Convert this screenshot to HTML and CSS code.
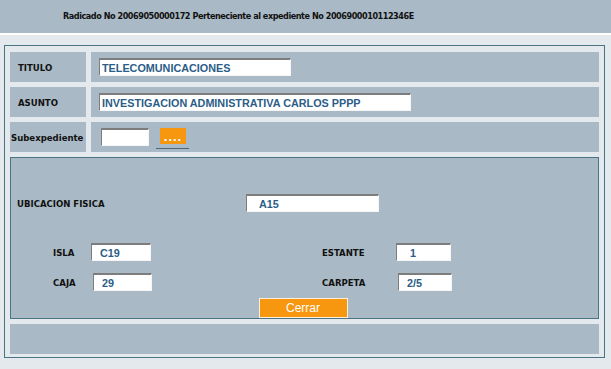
FILE: index.html
```html
<!DOCTYPE html>
<html lang="es">
<head>
    <meta charset="UTF-8">
    <title>Ubicacion fisica del radicado</title>
    <link rel="stylesheet" href="styles.css">
</head>
<body>

<!-- Cabecera -->
<div class="header">Radicado No 20069050000172 Perteneciente al expediente No 2006900010112346E</div>

<div class="main">
    <div class="box">
        <div class="row">
            <div class="cell label">TITULO</div>
            <div class="cell value"><input type="text" class="field field-titulo" value="TELECOMUNICACIONES"></div>
        </div>
        <div class="row">
            <div class="cell label">ASUNTO</div>
            <div class="cell value"><input type="text" class="field field-asunto" value="INVESTIGACION ADMINISTRATIVA CARLOS PPPP"></div>
        </div>
        <div class="row">
            <div class="cell label label-sub">Subexpediente</div>
            <div class="cell value value-sub">
                <input type="text" class="field field-sub" value="">
                <a href="#" class="dots-link"><span class="dots">....</span></a>
            </div>
        </div>

        <!-- Ubicacion -->
        <div class="panel">
            <div class="ubicacion">
                <span class="loc-label">UBICACION FISICA</span>
                <input type="text" class="field field-ubic" value="A15">
            </div>
            <div class="loc-row">
                <span class="loc-label">ISLA</span>
                <input type="text" class="field field-loc" value="C19">
                <span></span>
                <span class="loc-label">ESTANTE</span>
                <input type="text" class="field field-loc field-wide" value="1">
            </div>
            <div class="loc-row loc-row-2">
                <span class="loc-label">CAJA</span>
                <input type="text" class="field field-loc nudge" value="29">
                <span></span>
                <span class="loc-label">CARPETA</span>
                <input type="text" class="field field-loc nudge" value="2/5">
            </div>
            <div class="actions">
                <button class="btn-cerrar" onclick="window.close()">Cerrar</button>
            </div>
        </div>

        <div class="footer-row"></div>
    </div>
</div>

</body>
</html>
```

FILE: styles.css
```css
body {
    margin: 0;
    background-color: #e3e9ed;
    font-family: "DejaVu Sans Condensed", "DejaVu Sans", sans-serif;
}

.header {
    height: 33px;
    line-height: 33px;
    padding-left: 63px;
    background-color: #a9b9c5;
    border-bottom: 2px solid #ffffff;
    font-size: 9px;
    letter-spacing: -0.45px;
    font-weight: bold;
    color: #111;
}

.main {
    padding: 10px 6px 8px 4px;
}

.box {
    border: 1px solid #4b7482;
    padding: 6px 5px 3px 5px;
}

.row {
    display: grid;
    grid-template-columns: 76px 1fr;
    gap: 5px;
    margin-bottom: 5px;
}

.cell {
    height: 30px;
    background-color: #a9b9c5;
    display: flex;
    align-items: center;
}

.label {
    padding-left: 8px;
    font-size: 9.5px;
    font-weight: bold;
    color: #111;
}

.label-sub {
    padding-left: 1px;
}

.value {
    padding-left: 8px;
}

.value-sub {
    padding-left: 10px;
}

.field {
    box-sizing: border-box;
    height: 18px;
    margin: 0;
    padding: 0 0 0 2px;
    background-color: #fff;
    border: none;
    border-top: 2px solid #7d7d7d;
    border-left: 1px solid #7d7d7d;
    border-right: 1px solid #f6f6f6;
    border-bottom: 1px solid #f6f6f6;
    font-family: "Liberation Sans", Arial, sans-serif;
    font-size: 10.8px;
    font-weight: bold;
    color: #2b5d87;
    outline: none;
}

.field-titulo {
    width: 192px;
}

.field-asunto {
    width: 312px;
}

.field-sub {
    width: 48px;
}

.dots-link {
    margin-left: 7px;
    padding: 1px 3px 3px 4px;
    border-bottom: 1px solid #4f6473;
    text-decoration: none;
}

.dots {
    display: inline-block;
    width: 26px;
    height: 16px;
    line-height: 18px;
    background-color: #f7960f;
    color: #fff;
    font-family: "Liberation Sans", Arial, sans-serif;
    font-size: 13px;
    font-weight: bold;
    letter-spacing: 1px;
    text-align: center;
}

.panel {
    border: 1px solid #4b7482;
    background-color: #a9b9c5;
    padding: 36px 0 0 6px;
    margin-bottom: 5px;
}

.loc-label {
    font-size: 9.5px;
    font-weight: bold;
    color: #111;
}

.ubicacion {
    display: grid;
    grid-template-columns: 229px 133px;
    align-items: center;
}

.field-ubic {
    padding-left: 12px;
}

.loc-row {
    display: grid;
    grid-template-columns: 38px 60px 171px 74px 55px;
    align-items: center;
    padding-left: 36px;
    margin-top: 31px;
}

.loc-row-2 {
    margin-top: 12px;
}

.field-loc {
    width: 60px;
    padding-left: 8px;
}

.field-wide {
    width: 55px;
    padding-left: 13px;
}

.nudge {
    margin-left: 2px;
    width: 59px;
}

.loc-row-2 .field-loc:last-child {
    width: 54px;
}

.actions {
    display: flex;
    justify-content: center;
    margin-top: 7px;
    padding-right: 9px;
}

.btn-cerrar {
    width: 89px;
    height: 20px;
    padding: 0;
    background-color: #f7960f;
    border: 1px solid #fdf0dc;
    color: #fff;
    font-family: "Liberation Sans", Arial, sans-serif;
    font-size: 12px;
    cursor: pointer;
}

.footer-row {
    height: 30px;
    background-color: #a9b9c5;
}
```
